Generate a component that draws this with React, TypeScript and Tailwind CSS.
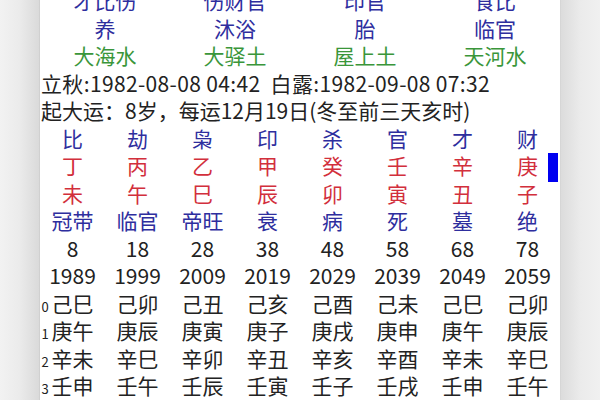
import React from "react";

const blue = "text-[#2e2e9e]";
const green = "text-[#3a963a]";
const red = "text-[#d22f3c]";
const dark = "text-[#222222]";

const top4: string[][] = [
  ["才比伤", "伤财官", "印官", "食比"],
  ["养", "沐浴", "胎", "临官"],
  ["大海水", "大驿土", "屋上土", "天河水"],
];
const top4Colors = [blue, blue, green];

const rows8: { cells: string[]; color: string }[] = [
  { cells: ["比", "劫", "枭", "印", "杀", "官", "才", "财"], color: blue },
  { cells: ["丁", "丙", "乙", "甲", "癸", "壬", "辛", "庚"], color: red },
  { cells: ["未", "午", "巳", "辰", "卯", "寅", "丑", "子"], color: red },
  { cells: ["冠带", "临官", "帝旺", "衰", "病", "死", "墓", "绝"], color: blue },
  { cells: ["8", "18", "28", "38", "48", "58", "68", "78"], color: dark },
  { cells: ["1989", "1999", "2009", "2019", "2029", "2039", "2049", "2059"], color: dark },
];

const ganzhi: string[][] = [
  ["己巳", "己卯", "己丑", "己亥", "己酉", "己未", "己巳", "己卯"],
  ["庚午", "庚辰", "庚寅", "庚子", "庚戌", "庚申", "庚午", "庚辰"],
  ["辛未", "辛巳", "辛卯", "辛丑", "辛亥", "辛酉", "辛未", "辛巳"],
  ["壬申", "壬午", "壬辰", "壬寅", "壬子", "壬戌", "壬申", "壬午"],
];

export default function App() {
  return (
    <div
      className="w-[600px] h-[400px] overflow-hidden flex bg-white"
      style={{ fontFamily: '"Noto Sans CJK SC", "Noto Sans", sans-serif' }}
    >
      <div className="w-[40px] h-full bg-gradient-to-r from-[#f2f2f2] via-[#ebebeb] to-[#dadada] border-r border-[#d0d0d0]" />
      <div className="relative w-[520px] h-full bg-white text-[21px] leading-[27.5px]">
        <div className="-mt-[13px]">
          {top4.map((r, i) => (
            <div key={i} className={`grid grid-cols-4 h-[27.5px] text-center ${top4Colors[i]}`}>
              {r.map((c, j) => (
                <div key={j}>{c}</div>
              ))}
            </div>
          ))}
          <div className={`h-[27.5px] pl-[1px] whitespace-pre tracking-[0.35px] ${dark}`}>立秋:1982-08-08 04:42  白露:1982-09-08 07:32</div>
          <div className={`h-[27.5px] pl-[1px] whitespace-pre ${dark}`}>起大运：8岁，每运12月19日(冬至前三天亥时)</div>
          {rows8.map((r, i) => (
            <div key={i} className={`grid grid-cols-8 h-[27.5px] text-center ${r.color}`}>
              {r.cells.map((c, j) => (
                <div key={j}>{c}</div>
              ))}
            </div>
          ))}
          {ganzhi.map((r, i) => (
            <div key={i} className={`grid grid-cols-8 h-[27.5px] text-center ${dark}`}>
              {r.map((c, j) => (
                <div key={j} className="whitespace-nowrap">
                  {j === 0 && (
                    <span className="inline-block text-[13px] leading-[13px] w-[10px] -ml-[10px] text-left">{i}</span>
                  )}
                  {c}
                </div>
              ))}
            </div>
          ))}
        </div>
        <div className="absolute left-[508px] top-[153px] w-[10px] h-[29px] bg-[#0000f0]" />
      </div>
      <div className="w-[40px] h-full bg-gradient-to-r from-[#dcdcdc] via-[#ebebeb] to-[#f0f0f0] border-l border-[#d6d6d6]" />
    </div>
  );
}
